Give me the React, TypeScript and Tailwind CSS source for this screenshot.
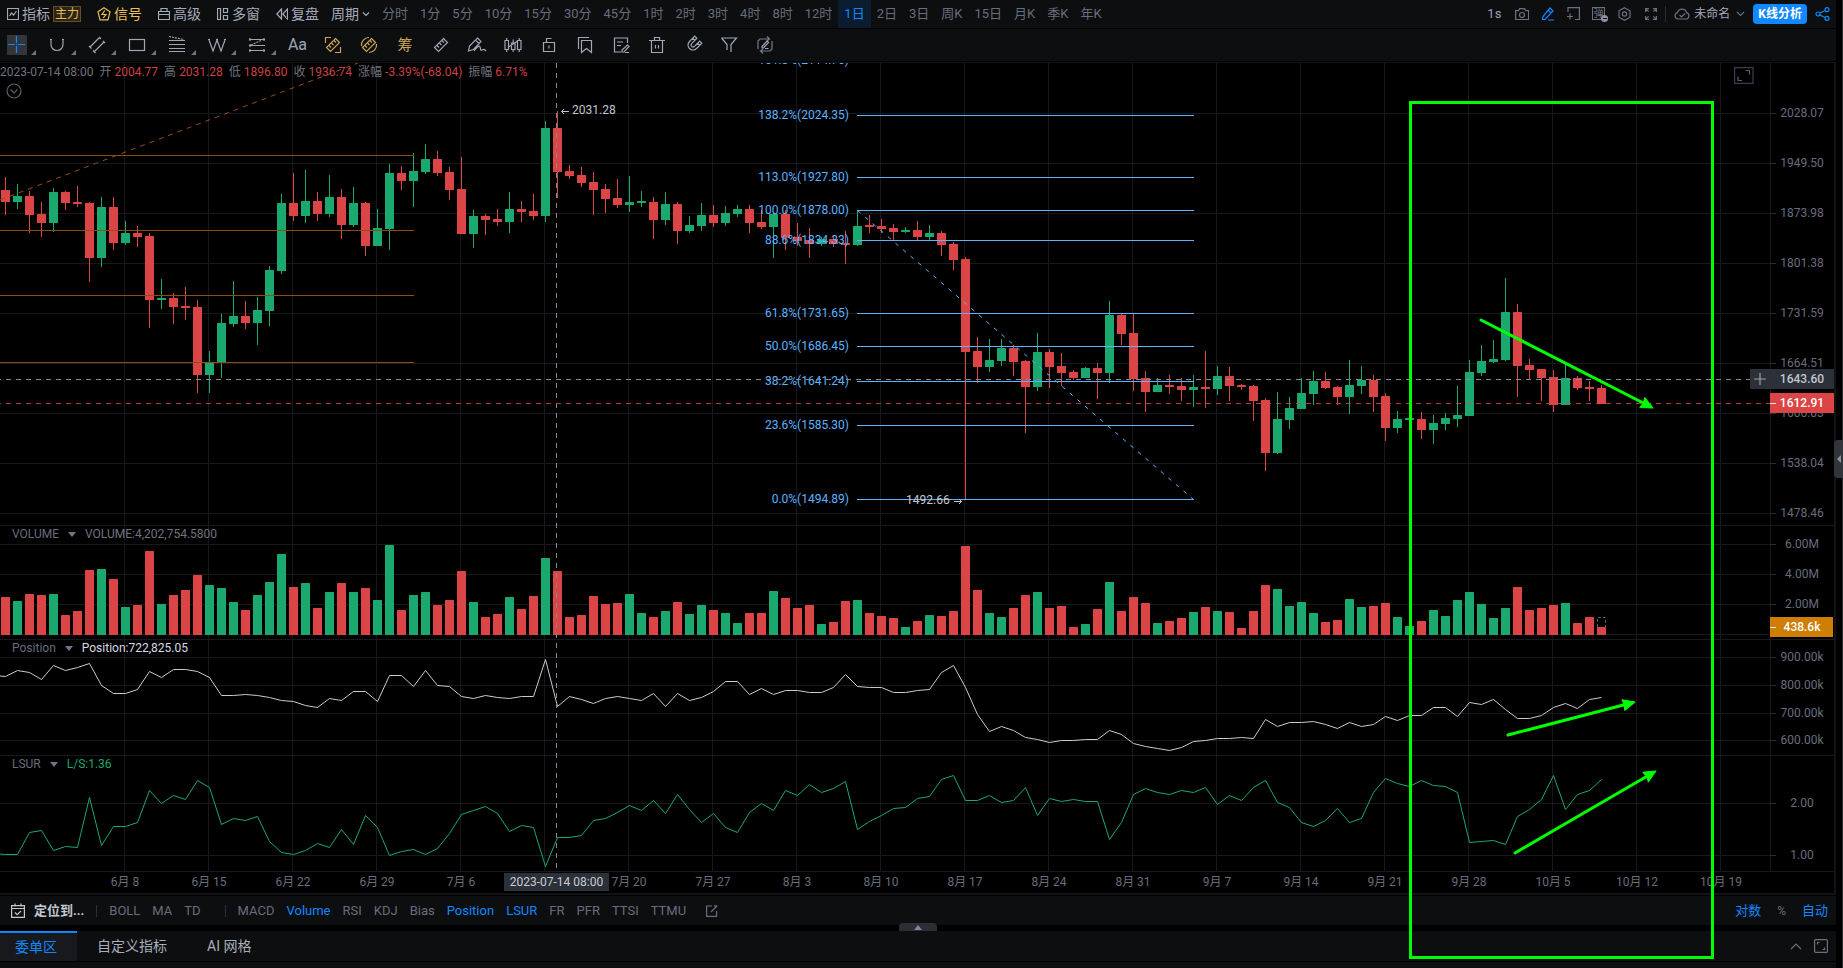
import type { ReactNode } from "react";

type Candle = [up: number, high: number, top: number, bottom: number, low: number];

const GREEN = "#1ba970";
const RED = "#db4545";
const GRID = "#17191d";
const MUTED = "#686d7d";
const BLUE = "#1188ff";
const FIB = "#5cb4ff";
const LIME = "#00ff00";

const STEP = 12;

// [up, high, body top, body bottom, low] on the price pane
const candles: Candle[] = [
  [0, 177, 190, 202, 215], [1, 184, 196, 202, 209], [0, 191, 196, 215, 233], [0, 202, 214, 223, 237],
  [1, 188, 192, 223, 232], [0, 191, 192, 203, 210], [0, 186, 202, 204, 207], [0, 202, 203, 258, 282],
  [1, 197, 207, 258, 267], [0, 197, 207, 243, 250], [1, 221, 233, 243, 245], [0, 226, 233, 237, 247],
  [0, 233, 236, 300, 328], [1, 279, 298, 300, 309], [0, 293, 298, 307, 324], [0, 287, 306, 308, 320],
  [0, 300, 307, 375, 393], [1, 351, 362, 375, 393], [1, 314, 323, 363, 378], [1, 281, 316, 324, 327],
  [0, 301, 316, 323, 329], [1, 297, 310, 323, 345], [1, 266, 270, 311, 326], [1, 194, 203, 271, 274],
  [0, 173, 203, 216, 221], [1, 170, 201, 216, 223], [0, 192, 201, 214, 221], [1, 175, 197, 214, 217],
  [0, 189, 197, 225, 239], [1, 187, 203, 225, 227], [0, 202, 203, 246, 256], [1, 209, 228, 246, 246],
  [1, 164, 173, 229, 250], [0, 166, 173, 181, 190], [1, 153, 171, 181, 207], [1, 144, 159, 172, 174],
  [0, 151, 159, 173, 176], [0, 167, 172, 190, 200], [0, 157, 189, 234, 234], [1, 210, 216, 234, 248],
  [0, 214, 216, 220, 235], [0, 209, 219, 222, 226], [1, 192, 209, 222, 233], [0, 201, 209, 212, 222],
  [0, 194, 211, 216, 220], [1, 121, 128, 216, 222], [0, 111, 128, 172, 198], [0, 165, 171, 176, 179],
  [0, 167, 175, 183, 187], [0, 172, 182, 190, 215], [0, 184, 189, 199, 213], [0, 179, 198, 205, 208],
  [1, 176, 202, 205, 212], [1, 191, 201, 203, 207], [0, 197, 202, 220, 239], [1, 192, 204, 220, 225],
  [0, 202, 204, 231, 244], [1, 216, 225, 231, 233], [1, 203, 215, 226, 231], [0, 205, 215, 223, 227],
  [1, 206, 213, 223, 226], [1, 205, 209, 214, 217], [0, 205, 209, 223, 233], [0, 210, 222, 227, 229],
  [1, 213, 214, 227, 258], [0, 210, 214, 238, 250], [0, 223, 237, 241, 246], [0, 228, 240, 244, 258],
  [1, 237, 239, 244, 246], [0, 236, 239, 244, 247], [0, 231, 243, 245, 264], [1, 210, 226, 245, 246],
  [0, 215, 225, 227, 233], [0, 219, 226, 229, 233], [0, 224, 228, 232, 240], [1, 227, 230, 232, 233],
  [0, 221, 230, 237, 240], [1, 225, 233, 237, 240], [0, 231, 233, 245, 256], [0, 242, 244, 260, 270],
  [0, 257, 259, 352, 500], [0, 337, 351, 367, 383], [1, 339, 360, 367, 372], [1, 339, 348, 361, 366],
  [0, 345, 348, 362, 376], [0, 360, 361, 387, 433], [1, 333, 352, 387, 391], [0, 349, 352, 367, 388],
  [0, 353, 366, 373, 386], [0, 370, 372, 378, 380], [1, 367, 368, 378, 378], [0, 363, 368, 373, 399],
  [1, 301, 315, 373, 383], [0, 314, 315, 334, 345], [0, 314, 333, 379, 391], [0, 371, 378, 392, 412],
  [1, 378, 385, 392, 392], [0, 375, 385, 387, 394], [0, 378, 386, 390, 401], [1, 375, 387, 390, 407],
  [0, 351, 387, 389, 408], [1, 366, 376, 389, 395], [0, 367, 376, 386, 401], [0, 384, 385, 387, 390],
  [0, 385, 386, 401, 421], [0, 398, 400, 453, 471], [1, 392, 419, 453, 454], [1, 397, 408, 420, 429],
  [1, 378, 393, 409, 409], [1, 371, 381, 394, 405], [0, 372, 381, 388, 389], [0, 386, 387, 397, 405],
  [1, 360, 385, 397, 414], [1, 366, 380, 386, 394], [0, 375, 380, 397, 412], [0, 393, 396, 428, 441],
  [1, 411, 419, 428, 433], [1, 418, 418, 420, 420], [0, 412, 419, 430, 439], [1, 415, 423, 430, 444],
  [1, 413, 418, 424, 430], [1, 386, 415, 419, 427], [1, 360, 372, 416, 416], [1, 345, 361, 373, 376],
  [1, 340, 359, 362, 363], [1, 278, 312, 360, 361], [0, 304, 312, 366, 397], [0, 359, 365, 370, 380],
  [0, 369, 369, 378, 401], [0, 370, 377, 405, 412], [1, 364, 378, 405, 405], [0, 376, 378, 388, 390],
  [0, 381, 387, 389, 401], [0, 385, 388, 404, 404],
];

const volumes = [
  38, 34, 41, 40, 41, 20, 24, 65, 66, 56, 28, 30, 84, 31, 40, 45, 60, 50, 47, 33, 25, 40, 53, 81, 48, 52, 27, 43, 52,
  43, 47, 35, 90, 25, 40, 43, 30, 35, 64, 33, 18, 21, 38, 26, 39, 77, 64, 18, 20, 39, 31, 32, 41, 22, 18, 24, 33, 21,
  30, 25, 22, 12, 22, 22, 44, 37, 27, 30, 11, 13, 34, 35, 22, 19, 17, 8, 14, 20, 19, 24, 89, 45, 22, 18, 27, 40, 43,
  27, 29, 8, 11, 26, 53, 24, 38, 32, 12, 14, 17, 23, 28, 24, 23, 7, 24, 50, 46, 29, 33, 22, 13, 15, 36, 28, 29, 32,
  18, 9, 14, 25, 19, 35, 43, 31, 17, 27, 48, 25, 27, 30, 32, 12, 18, 8,
];

const position = [
  676, 670, 672, 679, 665, 670, 667, 663, 685, 693, 693, 689, 671, 677, 669, 669, 671, 677, 695, 695, 694, 695, 697,
  700, 701, 705, 707, 698, 700, 691, 691, 701, 675, 675, 686, 670, 685, 686, 696, 698, 695, 697, 698, 696, 696, 659,
  706, 696, 699, 703, 698, 696, 698, 700, 693, 706, 693, 700, 697, 691, 681, 681, 694, 688, 694, 690, 690, 692, 692,
  687, 674, 686, 687, 687, 692, 692, 690, 689, 672, 665, 687, 714, 731, 726, 730, 737, 739, 742, 740, 740, 739, 739,
  730, 734, 743, 746, 748, 750, 747, 741, 740, 738, 738, 737, 738, 719, 726, 722, 722, 721, 724, 728, 722, 726, 724,
  716, 720, 715, 715, 707, 707, 716, 702, 704, 699, 709, 718, 718, 715, 707, 703, 708, 699, 697,
];

const lsur = [
  854, 854, 832, 830, 850, 846, 847, 797, 845, 826, 826, 822, 790, 803, 795, 799, 780, 787, 824, 818, 820, 816, 841,
  852, 854, 850, 843, 847, 829, 844, 815, 827, 855, 851, 849, 854, 848, 833, 814, 810, 806, 813, 831, 825, 827, 866,
  837, 837, 835, 820, 818, 812, 805, 810, 800, 813, 794, 809, 822, 813, 827, 832, 812, 803, 810, 790, 795, 784, 792,
  788, 781, 829, 821, 815, 808, 807, 798, 796, 779, 775, 800, 800, 795, 802, 800, 787, 815, 798, 801, 799, 801, 801,
  839, 822, 794, 788, 792, 794, 790, 792, 787, 804, 795, 800, 787, 780, 802, 807, 822, 826, 820, 808, 822, 818, 792,
  778, 783, 786, 780, 785, 786, 792, 842, 841, 840, 844, 816, 809, 799, 775, 809, 794, 790, 779,
];

const priceTicks: [number, string][] = [
  [113, "2028.07"], [163, "1949.50"], [213, "1873.98"], [263, "1801.38"], [313, "1731.59"],
  [363, "1664.51"], [413, "1600.03"], [463, "1538.04"], [513, "1478.46"],
];
const otherTicks: [number, string][] = [
  [544, "6.00M"], [574, "4.00M"], [604, "2.00M"],
  [657, "900.00k"], [685, "800.00k"], [713, "700.00k"], [740, "600.00k"],
  [803, "2.00"], [855, "1.00"],
];
const separators = [525, 639, 755, 871];

const dates = [
  "6月 8", "6月 15", "6月 22", "6月 29", "7月 6", "", "7月 20", "7月 27", "8月 3", "8月 10", "8月 17", "8月 24", "8月 31",
  "9月 7", "9月 14", "9月 21", "9月 28", "10月 5", "10月 12", "10月 19",
];

const fibLevels: [number, string][] = [
  [60, "161.8%(2114.76)"], [115, "138.2%(2024.35)"], [177, "113.0%(1927.80)"], [210, "100.0%(1878.00)"],
  [240, "88.6%(1834.33)"], [313, "61.8%(1731.65)"], [346, "50.0%(1686.45)"], [381, "38.2%(1641.24)"],
  [425, "23.6%(1585.30)"], [499, "0.0%(1494.89)"],
];

const intervals = [
  "分时", "1分", "5分", "10分", "15分", "30分", "45分", "1时", "2时", "3时", "4时", "8时", "12时", "1日", "2日", "3日",
  "周K", "15日", "月K", "季K", "年K",
];

const subIndicators = ["MACD", "Volume", "RSI", "KDJ", "Bias", "Position", "LSUR", "FR", "PFR", "TTSI", "TTMU"];
const activeIndicators = ["Volume", "Position", "LSUR"];

const ohlc = [
  ["开", "2004.77"],
  ["高", "2031.28"],
  ["低", "1896.80"],
  ["收", "1936.74"],
  ["涨幅", "-3.39%(-68.04)"],
  ["振幅", "6.71%"],
];

const toPoints = (values: number[]) =>
  `0,${values[0]} ` + values.map((v, i) => `${5.5 + i * STEP},${v + 0.5}`).join(" ");

function Icon({ w = 20, h = 20, className = "", children }: { w?: number; h?: number; className?: string; children: ReactNode }) {
  return (
    <svg width={w} height={h} viewBox={`0 0 ${w} ${h}`} fill="none" stroke="currentColor" strokeWidth={1.2} className={`shrink-0 ${className}`} aria-hidden="true">
      {children}
    </svg>
  );
}

const Ruler = () => (
  <>
    <path d="M12.5 3.5l4 4-9 9-4-4z" />
    <path d="M11 5.5l2 2M8.5 8l2 2M6 10.5l2 2" />
  </>
);

const drawTools: { name: string; icon: ReactNode }[] = [
  { name: "十字线", icon: <path d="M1 9.5h7M11 9.5h7M9.5 1v7M9.5 11v7M9 9.5h1" stroke={BLUE} /> },
  { name: "弧线", icon: <path d="M3 4.5h2M15 4.5h2M4 4.5v5a6 6 0 0 0 12 0v-5" /> },
  { name: "平行线", icon: <path d="M2.5 12.5l10-10M7 17l10-10M2 11l2.5 2.5M12 2l2 2M6 15.5l2.5 2.5M16 6l2 2" /> },
  { name: "矩形", icon: <rect x="2.5" y="4.5" width="15" height="11" /> },
  {
    name: "斐波那契",
    icon: (
      <>
        <path d="M2 5.5h16M2 9.5h16M2 13.5h16M2 16.5h16" />
        <path d="M2 1.5l15 3" strokeDasharray="2 1" />
      </>
    ),
  },
  { name: "波浪", icon: <path d="M2 5l4 11 4-11 4 11 4-11M1 4.5h2M9 4.5h2M17 4.5h2" /> },
  {
    name: "江恩",
    icon: (
      <>
        <path d="M2 4.5h16M2 10.5h16M2 15.5h16M3 3v3M17 3v3M3 9v3M3 14v3M17 14v3" />
        <path d="M4 10l11-5" strokeDasharray="2 1" />
      </>
    ),
  },
];

const extraTools: { name: string; gold?: boolean; icon: ReactNode }[] = [
  { name: "区间测量", gold: true, icon: <><Ruler /><path d="M2.5 8V2.5H8M17.5 12v5.5H12" /></> },
  { name: "周期测量", gold: true, icon: <><Ruler /><path d="M2.5 11A7.5 7.5 0 0 1 10 2.500M17.5 9A7.500 7.500 0 0 1 10 17.500" /></> },
  { name: "筹码", gold: true, icon: null },
  { name: "测量", icon: <Ruler /> },
  { name: "画笔", icon: <path d="M10.5 3l3.5 3.500-7.500 8-5 1.500 1-5zM8.500 5l3.500 3.500M7 16c3-4 5-6 6-4s0 4 2 3 2-1 4 1" /> },
  { name: "K线形态", icon: <path d="M2 5.5h3.500v9H2zM3.700 3v2.500M3.700 14.500V17M8.500 8H12v6.500H8.500zM10.200 4.500V8M10.200 14.500V17M5.500 12l9-6M14.500 5.500H18v9h-3.500zM16.200 3v2.500M16.200 14.500V17" /> },
  { name: "锁定", icon: <path d="M4.500 7.500h11v9h-11zM7.500 7.500v-4h5M10 10.500v3" /> },
  { name: "书签", icon: <path d="M6.500 5.500h10v12l-5-4-5 4zM3.500 14V2.500H14" /> },
  { name: "备注", icon: <path d="M16.500 8V3h-13v14H10M6 7h6M6 10.500h4M16.500 10l1.500 1.500-5 5.500h-2v-2zM14 17.500h4" /> },
  { name: "删除", icon: <path d="M2 5.500h16M7.500 5.500v-3h5v3M4.500 5.500v12h11v-12M8.500 10v3.500M11.500 10v3.500" /> },
  {
    name: "磁铁",
    icon: <path transform="rotate(45 10 10)" d="M5 2.500h3V10a2 2 0 0 0 4 0V2.500h3V10a5 5 0 0 1-10 0zM5 5.500h3M12 5.500h3" />,
  },
  { name: "筛选", icon: <path d="M2.500 3h15L12 9.500V17M2.500 3L8 9.500V15" /> },
  {
    name: "同步",
    icon: (
      <>
        <path d="M3 14V6l2-2h9M12 1.500l2.500 2.500L12 6M17 6v8l-2 2H6M8 14l-2.500 2L8 18.500" stroke="#777c8b" />
        <path d="M12 6l1.500 1.500-5 5.500H7v-1.500zM10 13.500h3.500" />
      </>
    ),
  },
];

function TopBar() {
  const main = "flex items-center gap-[3px] text-sm text-[#a4abb8]";
  return (
    <header className="flex h-7 items-center bg-[#0d0e10] pb-px pl-[7px] pr-1.5 text-[13px]">
      <button className={main}>
        <Icon w={12} h={12}>
          <path d="M.5 .5h11v11H.5zM2.5 8l2-3 2 2 3-4" />
        </Icon>
        指标
      </button>
      <button className="ml-[3px] h-4 w-7 border border-[#6c4c26] bg-[#2d2614] text-center text-xs leading-[14px] text-[#e3bd5c]">主力</button>
      <button className="ml-4 flex items-center gap-[3px] text-sm text-[#eec155]">
        <Icon w={14} h={14}>
          <path d="M7 .8l6 4-2 8H3l-2-8z" />
          <path d="M7.800 3.500L5 7.500h4L6.200 11" />
        </Icon>
        信号
      </button>
      <button className={`${main} ml-4`}>
        <Icon w={12} h={12}>
          <path d="M.5 3.5h11v8H.5zM.5 6.5h11M3 3.5v-3h6v3" />
        </Icon>
        高级
      </button>
      <button className={`${main} ml-4`}>
        <Icon w={12} h={12}>
          <path d="M.5 .5h3v11h-3zM6.5 .5h4v4h-4zM6.5 7.5h4v4h-4z" />
        </Icon>
        多窗
      </button>
      <button className={`${main} ml-4`}>
        <Icon w={12} h={12}>
          <path d="M5.5 1v10L.8 6zM11.500 1v10L6.800 6z" />
        </Icon>
        复盘
      </button>
      <button className={`${main} ml-3`}>
        周期
        <Icon w={8} h={6}>
          <path d="M1 1.5l3 3 3-3" />
        </Icon>
      </button>
      <nav className="-mb-px ml-1.5 flex h-7">
        {intervals.map((item) => (
          <button key={item} className={`h-full px-1.5 pb-px ${item === "1日" ? "bg-[#0b1b30] text-[#1188ff]" : "text-[#686d7d]"}`}>
            {item}
          </button>
        ))}
      </nav>

      <div className="ml-auto flex items-center text-[#6b7080]">
        <button className="mr-3.5 text-[#98a1b3]">1s</button>
        <button aria-label="截图" className="mr-3">
          <Icon w={14} h={12}>
            <path d="M.6 2.6h3l1-2h5l1 2h3v9H.6z" />
            <circle cx="7" cy="7" r="2.5" />
          </Icon>
        </button>
        <button aria-label="画图" className="mr-3 text-[#1188ff]">
          <Icon w={14} h={14}>
            <path d="M9 1l3 3-8 8.500H1.500l.5-3zM7 3l3 3M7 13h6" />
          </Icon>
        </button>
        <button aria-label="新建" className="mr-3">
          <Icon w={13} h={13}>
            <path d="M1 5V.6h11.400v12H8M0 9.500h6M3 6.500v6" />
          </Icon>
        </button>
        <button aria-label="弹幕" className="relative mr-3 h-[13px] w-[14px] text-left">
          <span className="flex size-[13px] items-center justify-center border border-current text-[10px] leading-none">弹</span>
          <span className="absolute -bottom-0.5 -right-0.5 flex size-[7px] items-center justify-center rounded-full bg-[#8d93a3]">
            <span className="h-px w-1 bg-[#0d0e10]" />
          </span>
        </button>
        <button aria-label="设置" className="mr-3.5">
          <Icon w={13} h={14}>
            <path d="M6.5 .8l5.500 3v6.400l-5.500 3-5.500-3V3.800z" />
            <circle cx="6.5" cy="7" r="2.2" />
          </Icon>
        </button>
        <button aria-label="全屏" className="mr-2">
          <Icon w={12} h={12}>
            <path d="M.6 4V.6H4M.6 .6l3 3M8 .6h3.400V4M11.400 .6l-3 3M.6 8v3.400H4M.6 11.400l3-3M8 11.400h3.400V8M11.400 11.400l-3-3" />
          </Icon>
        </button>
        <span className="mr-2 h-4 w-px bg-[#2b2e35]" />
        <button className="mr-2 flex items-center gap-1 text-xs text-[#a4abb8]">
          <Icon w={16} h={12} className="text-[#6b7080]">
            <path d="M4 11a3.200 3.200 0 0 1-.5-6.300 4.600 4.600 0 0 1 9 0A3.200 3.200 0 0 1 12 11zM5.500 7l2 2 3.500-3.500" />
          </Icon>
          未命名
          <Icon w={9} h={6} className="ml-0.5 text-[#6b7080]">
            <path d="M1 1l3.5 3.5L8 1" />
          </Icon>
        </button>
        <button className="mr-2 h-5 rounded-sm bg-[#1188ff] px-[5px] text-xs font-bold text-white">K线分析</button>
        <button aria-label="分享" className="text-[#1188ff]">
          <Icon w={15} h={14}>
            <circle cx="3" cy="7" r="2" />
            <circle cx="12" cy="2.7" r="2" />
            <circle cx="12" cy="11.3" r="2" />
            <path d="M5 6l5-2.5M5 8l5 2.5" />
          </Icon>
        </button>
      </div>
    </header>
  );
}

function DrawBar() {
  return (
    <div className="mt-px flex h-8 items-center bg-[#0d0e10] text-[#a0a6b4]">
      {drawTools.map((tool, i) => (
        <button key={tool.name} aria-label={tool.name} className="flex w-10 items-end gap-1 pl-[7px]">
          <span className={i === 0 ? "bg-[#33353b]" : ""}>
            <Icon>{tool.icon}</Icon>
          </span>
          <svg width="5" height="5" fill="#70758a" aria-hidden="true">
            <path d="M5 0v5H0z" />
          </svg>
        </button>
      ))}
      <button className="w-[35px] text-center text-base">Aa</button>
      {extraTools.map((tool) => (
        <button key={tool.name} aria-label={tool.name} className={`flex w-9 justify-center ${tool.gold ? "text-[#c9a555]" : ""}`}>
          {tool.icon ? <Icon>{tool.icon}</Icon> : <span className="text-[15px] leading-5">筹</span>}
        </button>
      ))}
    </div>
  );
}

function Plot() {
  return (
    <svg className="block h-[830px] w-full text-xs" aria-label="K线图">
      <g transform="translate(0 -63)">
        <g stroke={GRID} shapeRendering="crispEdges">
          {dates.map((_, i) => (
            <line key={i} x1={124.5 + i * 84} x2={124.5 + i * 84} y1={63} y2={871} />
          ))}
          {[...priceTicks, ...otherTicks].map(([y]) => (
            <line key={y} x1="0" x2="100%" y1={y + 0.5} y2={y + 0.5} />
          ))}
          <line x1="0" x2="100%" y1={634.5} y2={634.5} />
          {separators.map((y) => (
            <line key={y} x1="0" x2="100%" y1={y + 0.5} y2={y + 0.5} />
          ))}
        </g>

        {candles.map(([up, high, top, bottom, low], i) => (
          <g key={i} fill={up ? GREEN : RED}>
            <rect x={5 + i * STEP} y={high} width={1} height={low - high} />
            <rect x={1 + i * STEP} y={top} width={9} height={bottom - top} rx={0.5} />
            <rect x={1 + i * STEP} y={635 - volumes[i]} width={9} height={volumes[i]} rx={0.5} />
          </g>
        ))}
        <path d="M1597.5 627v-9.5h8v9.5" fill="none" stroke="#5a5d66" strokeDasharray="3 2" />

        <polyline points={toPoints(position)} fill="none" stroke="#c8cbd0" />
        <polyline points={toPoints(lsur)} fill="none" stroke={GREEN} />

        {/* left-hand channel */}
        <g stroke="#8c4f0c" shapeRendering="crispEdges">
          {[155, 230, 295, 362].map((y) => (
            <line key={y} x1={0} x2={414} y1={y + 0.5} y2={y + 0.5} />
          ))}
        </g>
        <line x1={0} y1={200} x2={358} y2={63} stroke="#9a4e10" strokeDasharray="5 5" />

        {/* fibonacci retracement */}
        {fibLevels.map(([y, label]) => (
          <g key={label}>
            <line x1={857} x2={1194} y1={y + 0.5} y2={y + 0.5} stroke={FIB} />
            <text x={849} y={y + 4} fill={FIB} textAnchor="end">{label}</text>
          </g>
        ))}
        <line x1={857.5} y1={210.5} x2={1193.5} y2={499.5} stroke={FIB} strokeDasharray="4 6" />

        <g fill="#c4c7cd" stroke="none">
          <text x={572} y={114}>2031.28</text>
          <text x={906} y={504}>1492.66</text>
        </g>
        <path d="M569 111.5h-7.500M564 109l-2.500 2.500 2.500 2.500M954 501.500h7.500M959 499l2.500 2.500-2.500 2.500" stroke="#c4c7cd" fill="none" />

        {/* crosshair and last price */}
        <g stroke="#858a96" strokeDasharray="5 5" shapeRendering="crispEdges">
          <line x1={556.5} x2={556.5} y1={63} y2={871} />
          <line x1={-4} x2="100%" y1={379.5} y2={379.5} />
        </g>
        <line x1={-4} x2="100%" y1={403.5} y2={403.5} stroke={RED} strokeOpacity={0.85} strokeDasharray="5 5" shapeRendering="crispEdges" />

        <g fill={MUTED} textAnchor="middle">
          {dates.map((d, i) => (
            <text key={i} x={125 + i * 84} y={886}>{d}</text>
          ))}
        </g>
        <rect x={504} y={873} width={105} height={18} fill="#2c3038" />
        <text x={556.5} y={886} textAnchor="middle" fill="#c9ccd2">2023-07-14 08:00</text>
      </g>
    </svg>
  );
}

function Axis() {
  return (
    <svg className="block h-[830px] w-16 shrink-0 text-xs" aria-label="坐标轴">
      <g transform="translate(0 -63)">
        <g stroke={GRID} shapeRendering="crispEdges">
          <line x1={0.5} x2={0.5} y1={63} y2={871} />
          {separators.map((y) => (
            <line key={y} x1={0} x2={64} y1={y + 0.5} y2={y + 0.5} />
          ))}
        </g>
        {[...priceTicks, ...otherTicks].map(([y, label]) => (
          <g key={y}>
            <line x1={0} x2={6} y1={y + 0.5} y2={y + 0.5} stroke="#2a2d33" />
            <text x={32} y={y + 4} fill={MUTED} textAnchor="middle">{label}</text>
          </g>
        ))}
        <rect x={0} y={369} width={64} height={20} fill="#2c3139" />
        <rect x={0} y={393} width={64} height={20} fill={RED} />
        <rect x={0} y={617} width={63} height={20} fill="#ce7d05" />
        <path d="M0 403.5h6M0 627.5h6" stroke="#f1e6dc" />
        <g textAnchor="middle" fill="#fff" className="font-medium">
          <text x={32} y={383} fill="#c2c6ce">1643.60</text>
          <text x={32} y={407}>1612.91</text>
          <text x={32} y={631}>438.6k</text>
        </g>
      </g>
    </svg>
  );
}

function PaneTitle({ name, value, className }: { name: string; value: string; className: string }) {
  return (
    <button className={`absolute left-3 flex items-center gap-[9px] text-xs leading-4 ${className}`}>
      <span className="text-[#686d7d]">{name}</span>
      <svg width="8" height="5" fill="#70758a" aria-hidden="true">
        <path d="M0 0h8L4 5z" />
      </svg>
      <span>{value}</span>
    </button>
  );
}

function ChartPanel() {
  return (
    <section className="mt-px flex border-t border-r-2 border-b-2 border-[#111316] bg-black">
      <div className="relative min-w-0 flex-1 overflow-hidden">
        <Plot />
        <div className="absolute left-0 top-px flex gap-1.5 text-xs leading-4 text-[#70747f]">
          <span className="whitespace-nowrap">2023-07-14 08:00</span>
          {ohlc.map(([label, value]) => (
            <span key={label} className="flex gap-[3px] whitespace-nowrap">
              {label}
              <span className="text-[#ca4245]">{value}</span>
            </span>
          ))}
        </div>
        <button aria-label="收起" className="absolute left-1.5 top-5 text-[#5d616d]">
          <Icon w={16} h={16}>
            <circle cx="8" cy="8" r="7" />
            <path d="M4.5 6.5L8 10l3.500-3.500" />
          </Icon>
        </button>
        <button aria-label="放大" className="absolute right-4 top-1 text-[#5a5e6e]">
          <Icon w={20} h={17}>
            <path d="M.6 .6h18.400v15.800H.6z" stroke="#3b3e50" />
            <path d="M11.5 3.500h4v4M4 9.500v4H8" />
          </Icon>
        </button>
        <PaneTitle name="VOLUME" value="VOLUME:4,202,754.5800" className="top-[463px] text-[#70747f]" />
        <PaneTitle name="Position" value="Position:722,825.05" className="top-[577px] text-[#d9dbe0]" />
        <PaneTitle name="LSUR" value="L/S:1.36" className="top-[693px] text-[#1ba970]" />
        <button aria-label="添加" className="absolute right-0 top-[306px] flex size-5 items-center justify-center bg-[#2c3139] text-[#9ba0ab]">
          <Icon w={12} h={12}>
            <path d="M6 0v12M0 6h12" />
          </Icon>
        </button>
      </div>
      <Axis />
    </section>
  );
}

function IndicatorBar() {
  return (
    <div className="mt-px flex h-[29px] items-center bg-[#0d0e10] pl-[11px] pr-2 text-[13px] text-[#686d7d]">
      <button className="flex items-center gap-[9px] font-bold text-[#c3c8d2]">
        <Icon w={14} h={15}>
          <path d="M.6 2.6h12.800v11.800H.6zM.6 5.500h12.800M4 .5v3M10 .5v3M4 9.500l2.200 2.200L10 8" />
        </Icon>
        定位到...
      </button>
      <span className="ml-3 mr-1.5 h-3 w-px bg-[#2b2e35]" />
      {["BOLL", "MA", "TD"].map((item) => (
        <button key={item} className="px-1.5">{item}</button>
      ))}
      <span className="ml-[18px] mr-1.5 h-3 w-px bg-[#2b2e35]" />
      {subIndicators.map((item) => (
        <button key={item} className={`px-1.5 ${activeIndicators.includes(item) ? "text-[#1188ff]" : ""}`}>
          {item}
        </button>
      ))}
      <button aria-label="编辑指标" className="ml-3.5">
        <Icon w={12} h={12}>
          <path d="M6 1H.6v10.400h10V6M5 7l6-6M8 .8h3.400" />
        </Icon>
      </button>
      <div className="ml-auto flex items-center gap-4">
        <button className="text-[#1188ff]">对数</button>
        <button className="text-xs">%</button>
        <button className="text-[#1188ff]">自动</button>
      </div>
    </div>
  );
}

function BottomTabs() {
  return (
    <div className="relative mt-1.5 flex h-[30px] items-stretch bg-[#0d0e10] text-sm text-[#a9afbb]">
      <button className="border-t-2 border-[#1188ff] bg-[#17191d] pl-[15px] pr-5 text-[#1188ff]">委单区</button>
      <button className="px-5">自定义指标</button>
      <button className="px-5">AI 网格</button>
      <div className="ml-auto flex items-center gap-3 pr-2 text-[#6b7080]">
        <button aria-label="展开">
          <Icon w={12} h={8}>
            <path d="M1 7l5-5 5 5" />
          </Icon>
        </button>
        <button aria-label="最大化">
          <Icon w={14} h={14}>
            <rect x=".6" y=".6" width="12.8" height="12.8" rx="1" />
            <path d="M3.5 5.5v-2h2M8.5 10.5h2v-2" />
          </Icon>
        </button>
      </div>
      <button aria-label="拉起面板" className="absolute -top-2 left-1/2 flex h-2 w-[38px] -translate-x-1/2 items-center justify-center rounded-t-sm bg-[#2c2e36]">
        <svg width="8" height="5" fill="#80859a" aria-hidden="true">
          <path d="M4 0l4 5H0z" />
        </svg>
      </button>
    </div>
  );
}

function Arrow({ from, to }: { from: [number, number]; to: [number, number] }) {
  const angle = (Math.atan2(to[1] - from[1], to[0] - from[0]) * 180) / Math.PI;
  const length = Math.hypot(to[0] - from[0], to[1] - from[1]);
  return (
    <g transform={`translate(${from[0]} ${from[1]}) rotate(${angle})`}>
      <path d={`M0 0H${length - 6}`} stroke={LIME} strokeWidth={3} strokeLinecap="round" />
      <path d={`M${length} 0l-12-5.500 1 5.500-1 5.500z`} fill={LIME} stroke={LIME} strokeLinejoin="round" />
    </g>
  );
}

export default function App() {
  return (
    <div className="relative flex min-h-screen overflow-hidden bg-black font-['Roboto','Noto_Sans_CJK_SC',sans-serif]">
      <main className="flex min-w-0 flex-1 flex-col">
        <TopBar />
        <DrawBar />
        <ChartPanel />
        <IndicatorBar />
        <BottomTabs />
        <div className="mt-px flex-1 bg-[#0d0e10]" />
      </main>
      <aside className="relative w-[7px] border-r border-[#2a2b2e]">
        <button aria-label="展开侧栏" className="absolute -left-0.5 top-[440px] flex h-[38px] w-[9px] items-center justify-center rounded-l-sm bg-[#33353c]">
          <svg width="4" height="8" fill="#8a8fa0" aria-hidden="true">
            <path d="M4 0v8L0 4z" />
          </svg>
        </button>
      </aside>
      <svg className="pointer-events-none absolute inset-0 h-full w-full" aria-hidden="true">
        <rect x={1410.5} y={102.5} width={302} height={855} fill="none" stroke={LIME} strokeWidth={3} />
        <Arrow from={[1481, 320]} to={[1653, 408]} />
        <Arrow from={[1508, 735]} to={[1635, 702]} />
        <Arrow from={[1515, 853]} to={[1656, 771]} />
      </svg>
    </div>
  );
}
